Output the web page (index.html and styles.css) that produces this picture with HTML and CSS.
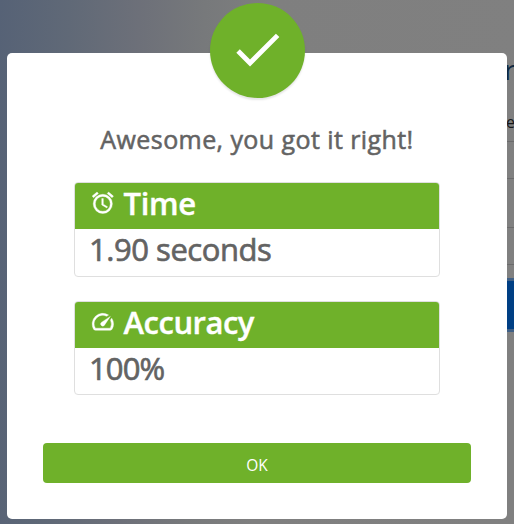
FILE: index.html
```html
<!DOCTYPE html>
<html lang="en">
<head>
<meta charset="utf-8">
<title>Result</title>
<link rel="stylesheet" href="styles.css">
</head>
<body>
<div class="page" aria-hidden="true">
  <span class="page-title">r</span>
  <span class="page-text">e</span>
  <i class="rule rule-a"></i>
  <i class="rule rule-b"></i>
  <i class="rule rule-c"></i>
  <i class="rule rule-d"></i>
  <i class="page-button"></i>
</div>
<main class="modal">
  <div class="badge">
    <svg viewBox="0 0 24 24"><path d="M9 16.17 4.83 12l-1.42 1.41L9 19 21 7l-1.41-1.41z"/></svg>
  </div>
  <h1 class="title"><span>Awesome, you got it right!</span></h1>
  <section class="card">
    <h2 class="card-head">
      <svg viewBox="0 0 24 24"><path d="M12 20a7 7 0 0 1 0-14 7 7 0 0 1 0 14m0-16a9 9 0 0 0 0 18 9 9 0 0 0 0-18m.5 4H11v6l4.75 2.85.75-1.23-4-2.37V8M7.88 3.39 6.6 1.86 2 5.71l1.29 1.53 4.59-3.85M22 5.72l-4.6-3.86-1.29 1.53 4.6 3.86L22 5.72z"/></svg>
      <span class="head-time">Time</span>
    </h2>
    <p class="card-body"><span class="val-time">1.90 seconds</span></p>
  </section>
  <section class="card">
    <h2 class="card-head">
      <svg viewBox="0 0 24 24"><path d="M20.38 8.57l-1.23 1.85a8 8 0 0 1-.22 7.58H5.07A8 8 0 0 1 15.58 6.85l1.85-1.23A10 10 0 0 0 3.35 19a2 2 0 0 0 1.72 1h13.85a2 2 0 0 0 1.74-1 10 10 0 0 0-.27-10.44zm-9.79 6.84a2 2 0 0 0 2.83 0l5.66-8.49-8.49 5.66a2 2 0 0 0 0 2.83z"/></svg>
      <span class="head-acc">Accuracy</span>
    </h2>
    <p class="card-body"><span class="val-acc">100%</span></p>
  </section>
  <button class="ok">OK</button>
</main>
</body>
</html>
```
FILE: styles.css
```css
* { box-sizing: border-box; }
body {
  margin: 0;
  height: 524px;
  overflow: hidden;
  padding: 53px 7px 0;
  font-family: "Open Sans", "Noto Sans", sans-serif;
  color: #636363;
  background: linear-gradient(92deg, #566276 0, #606977 70px, #6d7079 140px, #77797b 205px, #7f7f7f 270px, #808080 100%);
}
.page { position: absolute; inset: 0; overflow: hidden; }
.page > * { position: absolute; }
.page-title { left: 504px; top: 50px; font-size: 28px; line-height: 38px; font-weight: 400; color: #102840; }
.page-text { left: 506px; top: 111px; font-size: 16px; line-height: 22px; color: #151719; }
.rule { left: 507px; right: 0; height: 1px; background: #6b6b6c; }
.rule-a { top: 141px; }
.rule-b { top: 178px; }
.rule-c { top: 227px; }
.rule-d { top: 264px; }
.page-button {
  left: 480px; right: -20px; top: 278px; height: 54px;
  background: #003f84; border: 3px solid #406086;
}
.modal {
  position: relative;
  width: 500px;
  height: 466px;
  padding: 67px 36px 36px;
  background: #fff;
  border-radius: 5px;
}
.badge {
  position: absolute;
  left: 203px; top: -50px;
  width: 95px; height: 95px;
  border-radius: 50%;
  background: #6fb12a;
  box-shadow: 0 2px 2px rgba(0, 0, 0, .1);
}
.badge svg { display: block; width: 58.7px; height: 58.7px; margin: 17.3px 0 0 17.5px; fill: #fff; }
.title {
  margin: 0 0 22px;
  height: 40px;
  font-size: 25px;
  line-height: 39px;
  font-weight: 500;
  text-align: center;
  letter-spacing: .42px;
  -webkit-text-stroke: .55px #636363;
  white-space: nowrap;
}
.card {
  width: 366px;
  height: 95px;
  margin: 0 auto 24px 31px;
  border: 1px solid #dfdfdf;
  border-radius: 4px;
  overflow: hidden;
}
.card + .card { height: 94px; margin-bottom: 48px; }
.card-head {
  display: flex;
  height: 46px;
  margin: 0;
  padding-left: 15px;
  gap: 8px;
  font-size: 31px;
  line-height: 41px;
  font-weight: 600;
  color: #fff;
  background: #6fb12a;
}
.card-head svg { width: 25.6px; height: 25.6px; margin-top: 6.5px; margin-left: -.4px; margin-right: .4px; fill: #fff; stroke: #fff; stroke-width: .35; }
.card-head span { -webkit-text-stroke: .4px #fff; }
.head-time { letter-spacing: -.4px; }
.head-acc { letter-spacing: -.5px; }
.card-body { margin: 0; padding-left: 14px; font-size: 31px; line-height: 41px; font-weight: 500; white-space: nowrap; -webkit-text-stroke: .65px #636363; }
.val-time { letter-spacing: -.46px; }
.val-acc { letter-spacing: -.9px; }
.ok {
  display: block;
  width: 428px;
  height: 40px;
  margin: 0;
  padding: 3px 0 0;
  border: 0;
  border-radius: 4px;
  background: #6fb12a;
  color: #fff;
  font: 15.5px/20px "Open Sans", "Noto Sans", sans-serif;
}
```
